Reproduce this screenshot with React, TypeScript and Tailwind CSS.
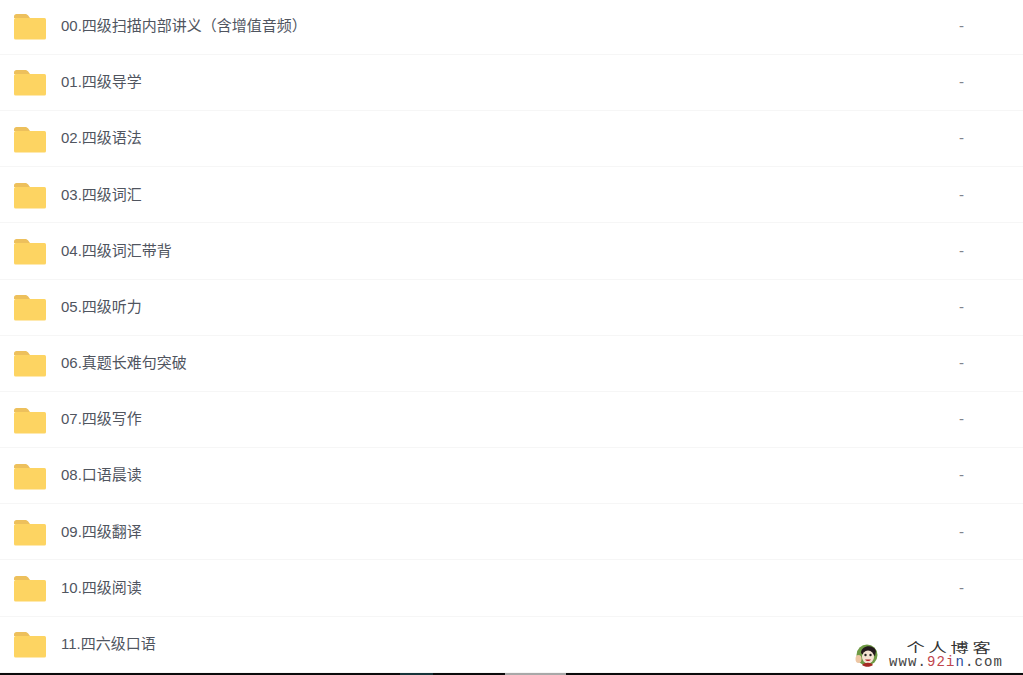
const folders = [
  '00.四级扫描内部讲义（含增值音频）',
  '01.四级导学',
  '02.四级语法',
  '03.四级词汇',
  '04.四级词汇带背',
  '05.四级听力',
  '06.真题长难句突破',
  '07.四级写作',
  '08.口语晨读',
  '09.四级翻译',
  '10.四级阅读',
  '11.四六级口语',
]

function FolderIcon() {
  return (
    <svg width="34" height="28" viewBox="0 0 34 28" className="mt-[2px] shrink-0">
      <path d="M1 3.5C1 2 2 1 3.5 1h8.5c1.5 0 2.5.6 3.2 1.6L17 5H1z" fill="#edc05c" />
      <rect x="1" y="5" width="32" height="21.5" rx="1.5" fill="#fdd462" />
    </svg>
  )
}

function Mascot() {
  return (
    <svg width="24" height="26" viewBox="0 0 24 26">
      <circle cx="12" cy="13" r="10.5" fill="#6f9a45" />
      <path d="M6 11C6 3 19 2 21 9l-1 5-8-5-3 5z" fill="#23181c" />
      <ellipse cx="13" cy="15" rx="6" ry="6.5" fill="#f4e2d2" />
      <circle cx="10.5" cy="13" r="1.2" fill="#222" />
      <circle cx="15.5" cy="13" r="1.2" fill="#222" />
      <path d="M10 17.5c1.5 2 4.5 2 6 0z" fill="#b3262a" />
      <path d="M7 23c3-3 9-3 11 0-3 2.4-8 2.4-11 0z" fill="#a52a24" />
      <ellipse cx="3.5" cy="17" rx="3" ry="4" fill="#edc6a4" />
    </svg>
  )
}

export default function App() {
  return (
    <div className="relative h-[675px] w-[1023px] overflow-hidden bg-white font-['Liberation_Sans','Noto_Sans_CJK_SC',sans-serif]">
      <div className="-mt-[1.4px]">
        {folders.map((name, i) => (
          <div key={name} className="flex h-[56.2px] items-center border-b border-[#f6f6f6] pl-[13px]">
            <FolderIcon />
            <span className="ml-[14px] flex-1 text-[15px] text-[#50555f]">{name}</span>
            {/* last dash sits under the watermark */}
            {i < folders.length - 1 && <span className="mr-[59px] text-[15px] text-[#80848c]">-</span>}
          </div>
        ))}
      </div>

      {/* watermark */}
      <div className="absolute left-[855px] top-[640px] flex items-center bg-white pr-5">
        <Mascot />
        <div className="ml-[10px] flex flex-col items-center leading-none">
          <span className="ml-[8px] origin-center scale-x-[1.4] font-['Noto_Sans_CJK_SC',serif] text-[13px] leading-[14px] tracking-[2.7px] text-[#333333]">个人博客</span>
          <span className="mt-[2px] font-['Liberation_Mono',monospace] text-[14px] leading-[13px] tracking-[1.1px] text-[#444444]">
            www.<span className="text-[#c0454c]">92i</span><span className="text-[#2b4f9e]">n</span>.com
          </span>
        </div>
      </div>

      {/* bottom edge */}
      <div className="absolute bottom-0 left-0 flex h-[2px] w-full bg-[#0b0b0b]">
        <div className="ml-[400px] w-[33px] bg-[#17343a]" />
        <div className="ml-[72px] w-[61px] bg-[#a8a8a8]" />
      </div>
    </div>
  )
}
